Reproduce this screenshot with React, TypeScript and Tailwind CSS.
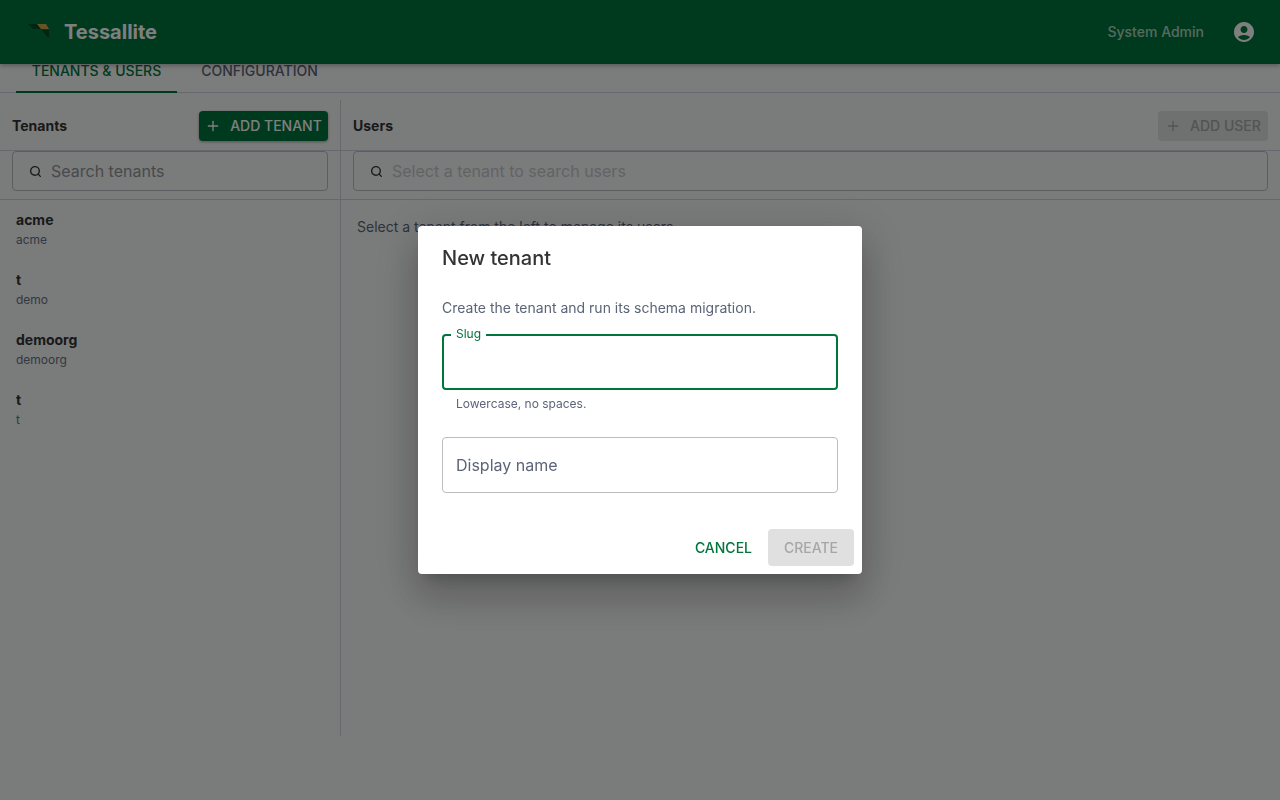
import React from 'react';
import { Plus, Search } from 'lucide-react';

const tenants = [
  { name: 'acme', slug: 'acme' },
  { name: 't', slug: 'demo' },
  { name: 'demoorg', slug: 'demoorg' },
  { name: 't', slug: 't' },
];

const Logo = () => (
  <svg width="24" height="16" viewBox="0 0 24 16" className="block">
    <polygon points="0,0 10,0 14,5 5,5" fill="#004a25" />
    <polygon points="9,0 18,0 21,5 13,5" fill="#d9a441" />
    <polygon points="14,6 21,6 21,13 19,13" fill="#004a25" />
  </svg>
);

const UserIcon = () => (
  <svg width="24" height="24" viewBox="0 0 24 24" fill="#ffffff">
    <path d="M12 2C6.48 2 2 6.48 2 12s4.48 10 10 10 10-4.48 10-10S17.52 2 12 2zm0 4c1.93 0 3.5 1.57 3.5 3.5S13.93 13 12 13s-3.5-1.57-3.5-3.5S10.07 6 12 6zm0 14c-2.03 0-4.43-.82-6.14-2.88C7.55 15.8 9.68 15 12 15s4.45.8 6.14 2.12C16.43 19.18 14.03 20 12 20z" />
  </svg>
);

const SearchBox = ({ placeholder, muted }: { placeholder: string; muted?: boolean }) => (
  <div className="h-10 flex items-center rounded border border-[#b8bcc4] px-4">
    <Search size={13} strokeWidth={2.5} className="text-[#333333] mr-[9px] shrink-0" />
    <span className={muted ? 'text-base text-[#c4c6ca]' : 'text-base text-[#8f9399]'}>{placeholder}</span>
  </div>
);

const App: React.FC = () => {
  return (
    <div className="h-[800px] overflow-hidden bg-[#f5f7f6] text-[#333333] font-['Inter',sans-serif]">
      {/* Header */}
      <header className="relative z-10 h-16 bg-[#00753c] shadow-[0_2px_4px_rgba(0,0,0,0.25)] flex items-center pl-7 pr-6">
        <Logo />
        <span className="ml-3 text-xl font-bold text-white">Tessallite</span>
        <span className="ml-auto text-sm font-medium text-white/70">System Admin</span>
        <span className="ml-7"><UserIcon /></span>
      </header>

      {/* Tabs */}
      <nav className="h-[29px] flex px-4 border-b border-[#cbd2da] bg-[#f7f8f8]">
        <div className="w-[161px] h-[29px] text-center text-sm leading-[14px] font-medium text-[#00753c] border-b-2 border-[#00753c]">
          TENANTS &amp; USERS
        </div>
        <div className="w-[165px] h-[28px] text-center text-sm leading-[14px] font-medium text-[#5b6478]">
          CONFIGURATION
        </div>
      </nav>

      <main className="pt-[7px] flex">
        {/* Tenants */}
        <section className="w-[341px] h-[636px] border-r border-[#cbd2da]">
          <div className="h-[51px] flex items-center justify-between px-3 pt-[1px] border-b border-[#cbd2da]">
            <span className="text-sm font-bold">Tenants</span>
            <button className="w-[129px] h-[30px] flex items-center justify-center gap-[9px] rounded bg-[#00753c] text-white text-sm font-medium shadow-[0_1px_3px_rgba(0,0,0,0.35)]">
              <Plus size={16} />
              ADD TENANT
            </button>
          </div>
          <div className="h-[49px] px-3 border-b border-[#cbd2da]">
            <SearchBox placeholder="Search tenants" />
          </div>
          {tenants.map((t, i) => (
            <div key={i} className="h-[60px] pl-4 pt-[11px]">
              <div className="text-sm leading-[18px] font-bold">{t.name}</div>
              <div className="text-xs leading-[20px] mt-[1px] text-[#667085]">{t.slug}</div>
            </div>
          ))}
        </section>

        {/* Users */}
        <section className="flex-1">
          <div className="h-[51px] flex items-center justify-between px-3 pt-[1px] border-b border-[#cbd2da]">
            <span className="text-sm font-bold">Users</span>
            <button className="w-[110px] h-[30px] flex items-center justify-center gap-[9px] rounded bg-[#dfe0e0] text-[#a6a8a8] text-sm font-medium">
              <Plus size={16} />
              ADD USER
            </button>
          </div>
          <div className="h-[49px] px-3 border-b border-[#cbd2da]">
            <SearchBox placeholder="Select a tenant to search users" muted />
          </div>
          <p className="pl-4 pt-[17px] text-sm leading-[20px] text-[#5b6478]">Select a tenant from the left to manage its users.</p>
        </section>
      </main>

      {/* Dialog */}
      <div className="fixed inset-0 z-20 bg-black/50 flex items-center justify-center">
        <div className="w-[444px] h-[348px] bg-white rounded shadow-[0_11px_15px_-7px_rgba(0,0,0,0.2),0_24px_38px_3px_rgba(0,0,0,0.14),0_9px_46px_8px_rgba(0,0,0,0.12)]">
          <h2 className="px-6 pt-4 h-[64px] text-xl leading-8 font-medium text-[#333333]">New tenant</h2>
          <p className="px-6 mt-[8px] text-sm leading-[20px] text-[#5b6478]">Create the tenant and run its schema migration.</p>
          <div className="px-6 mt-[16px]">
            <div className="relative h-14 rounded border-2 border-[#00753c]">
              <span className="absolute -top-[9px] left-[7px] bg-white px-[5px] text-xs leading-[14px] text-[#00753c]">Slug</span>
            </div>
            <p className="pl-[14px] mt-[6px] text-xs leading-[15px] text-[#5b6478]">Lowercase, no spaces.</p>
            <div className="h-14 mt-[26px] rounded border border-[#bdbdbd] flex items-center px-[13px] text-base text-[#5b6478]">
              Display name
            </div>
          </div>
          <div className="mt-9 px-2 flex justify-end items-center gap-2">
            <button className="h-[37px] px-2 text-sm font-medium text-[#00753c]">CANCEL</button>
            <button className="w-[86px] h-[37px] rounded bg-[#e0e0e0] text-sm font-medium text-[#a6a6a6]">CREATE</button>
          </div>
        </div>
      </div>
    </div>
  );
};

export default App;
